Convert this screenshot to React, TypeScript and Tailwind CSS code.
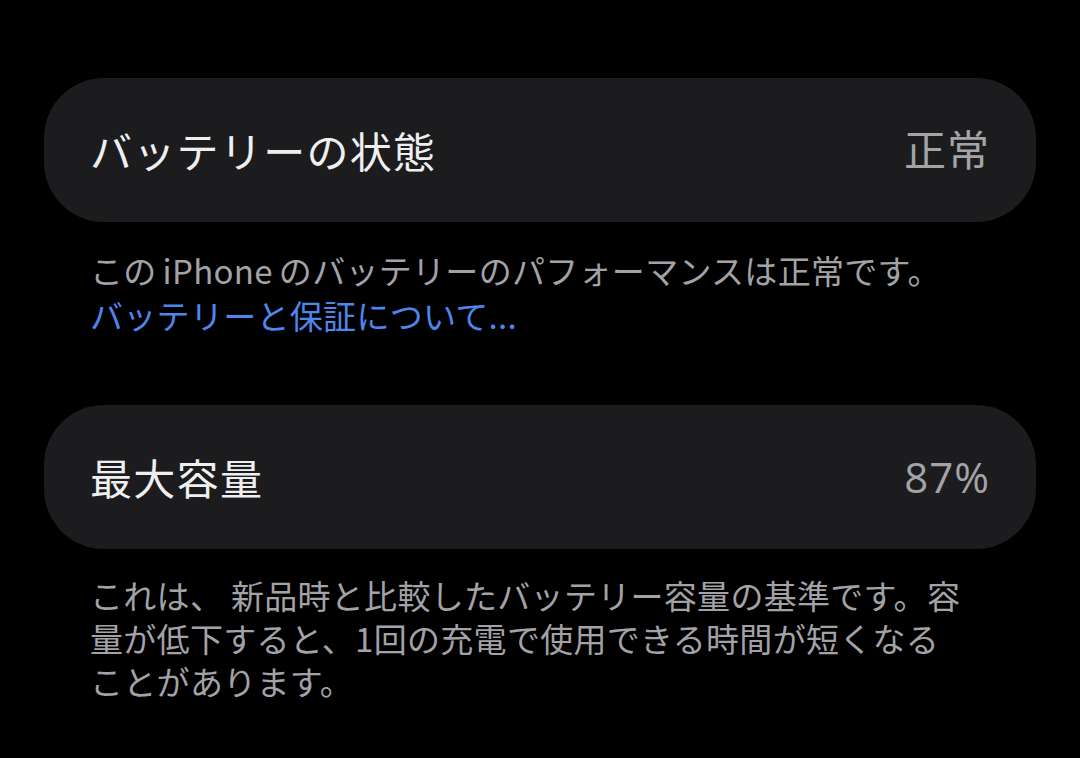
import React from 'react'

const jp = { fontFamily: '"Noto Sans CJK JP", "Noto Sans", sans-serif' }

function Row({ label, value }: { label: string; value: string }) {
  return (
    <div className="flex h-[144px] items-center justify-between rounded-[60px] bg-[#1c1c1e] pl-[46px] pr-[46px]">
      <span className="text-[42px] leading-none tracking-[1.3px] text-[#efeff0]">{label}</span>
      <span className="text-[42px] leading-none tracking-[1px] text-[#a3a3a8] [font-family:'Open_Sans','Noto_Sans_CJK_JP',sans-serif]">
        {value}
      </span>
    </div>
  )
}

export default function App() {
  return (
    <div className="min-h-[758px] w-[1080px] bg-black px-[44px] pt-[78px]" style={jp}>
      <Row label="バッテリーの状態" value="正常" />
      <p className="mt-[26px] pl-[46px] text-[33px] leading-[45px] tracking-[0.3px] text-[#a2a2a7]">
        この<span className="mx-[6px]">iPhone</span>のバッテリーのパフォーマンスは正常です。
        <br />
        <span className="text-[#4f86ec]">バッテリーと保証について...</span>
      </p>

      <div className="mt-[67px]">
        <Row label="最大容量" value="87%" />
      </div>
      <p className="mt-[25px] pl-[46px] text-[33px] leading-[43px] tracking-[0.3px] text-[#a2a2a7]">
        これは、 新品時と比較したバッテリー容量の基準です。容
        <br />
        量が低下すると、1回の充電で使用できる時間が短くなる
        <br />
        ことがあります。
      </p>
    </div>
  )
}
